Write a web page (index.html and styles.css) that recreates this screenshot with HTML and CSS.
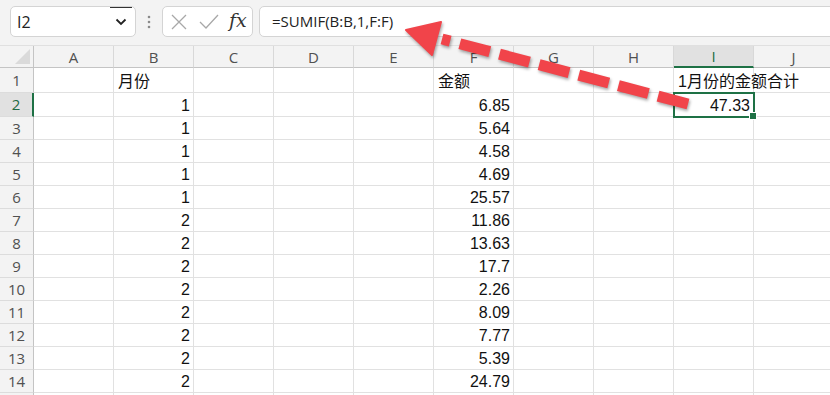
FILE: index.html
```html
<!DOCTYPE html>
<html lang="zh-CN">
  <head>
    <meta charset="UTF-8" />
    <title>SUMIF</title>
    <link rel="stylesheet" href="styles.css">
  </head>
  <body>
    <div class="toolbar">
      <div class="namebox">
        <span class="ref">I2</span>
        <span class="drop">
          <svg width="12" height="8" viewBox="0 0 12 8"><path d="M1.5 1.5 L6 6 L10.5 1.5" fill="none" stroke="#222" stroke-width="1.8"/></svg>
        </span>
      </div>
      <div class="grip">
        <svg width="4" height="16" viewBox="0 0 4 16"><circle cx="2" cy="3" r="1.3" fill="#8a8a8a"/><circle cx="2" cy="8" r="1.3" fill="#8a8a8a"/><circle cx="2" cy="13" r="1.3" fill="#8a8a8a"/></svg>
      </div>
      <div class="fxbox">
        <svg width="16" height="16" viewBox="0 0 16 16"><path d="M1 1 L15 15 M15 1 L1 15" stroke="#a8a8a8" stroke-width="1.3"/></svg>
        <svg width="20" height="16" viewBox="0 0 20 16"><path d="M1 8 L7 14 L19 1" fill="none" stroke="#a8a8a8" stroke-width="1.3"/></svg>
        <span class="fx">fx</span>
      </div>
      <div class="formula">=SUMIF(B:B,1,F:F)</div>
    </div>

    <div class="sheet">
      <div class="row head">
        <div class="corner"><span class="tri"></span></div>
        <div class="col">A</div><div class="col">B</div><div class="col">C</div><div class="col">D</div><div class="col">E</div>
        <div class="col">F</div><div class="col">G</div><div class="col">H</div><div class="col sel">I</div><div class="col">J</div>
      </div>
      <div class="row first">
        <div class="rh">1</div>
        <div></div><div class="txt">月份</div><div></div><div></div><div></div>
        <div class="txt">金额</div><div></div><div></div><div class="txt">1月份的金额合计</div><div></div>
      </div>
      <div class="row second">
        <div class="rh sel">2</div>
        <div></div><div class="num">1</div><div></div><div></div><div></div>
        <div class="num">6.85</div><div></div><div></div><div class="num active">47.33</div><div></div>
      </div>
      <div class="row">
        <div class="rh">3</div>
        <div></div><div class="num">1</div><div></div><div></div><div></div>
        <div class="num">5.64</div><div></div><div></div><div></div><div></div>
      </div>
      <div class="row">
        <div class="rh">4</div>
        <div></div><div class="num">1</div><div></div><div></div><div></div>
        <div class="num">4.58</div><div></div><div></div><div></div><div></div>
      </div>
      <div class="row">
        <div class="rh">5</div>
        <div></div><div class="num">1</div><div></div><div></div><div></div>
        <div class="num">4.69</div><div></div><div></div><div></div><div></div>
      </div>
      <div class="row">
        <div class="rh">6</div>
        <div></div><div class="num">1</div><div></div><div></div><div></div>
        <div class="num">25.57</div><div></div><div></div><div></div><div></div>
      </div>
      <div class="row">
        <div class="rh">7</div>
        <div></div><div class="num">2</div><div></div><div></div><div></div>
        <div class="num">11.86</div><div></div><div></div><div></div><div></div>
      </div>
      <div class="row">
        <div class="rh">8</div>
        <div></div><div class="num">2</div><div></div><div></div><div></div>
        <div class="num">13.63</div><div></div><div></div><div></div><div></div>
      </div>
      <div class="row">
        <div class="rh">9</div>
        <div></div><div class="num">2</div><div></div><div></div><div></div>
        <div class="num">17.7</div><div></div><div></div><div></div><div></div>
      </div>
      <div class="row">
        <div class="rh">10</div>
        <div></div><div class="num">2</div><div></div><div></div><div></div>
        <div class="num">2.26</div><div></div><div></div><div></div><div></div>
      </div>
      <div class="row">
        <div class="rh">11</div>
        <div></div><div class="num">2</div><div></div><div></div><div></div>
        <div class="num">8.09</div><div></div><div></div><div></div><div></div>
      </div>
      <div class="row">
        <div class="rh">12</div>
        <div></div><div class="num">2</div><div></div><div></div><div></div>
        <div class="num">7.77</div><div></div><div></div><div></div><div></div>
      </div>
      <div class="row">
        <div class="rh">13</div>
        <div></div><div class="num">2</div><div></div><div></div><div></div>
        <div class="num">5.39</div><div></div><div></div><div></div><div></div>
      </div>
      <div class="row">
        <div class="rh">14</div>
        <div></div><div class="num">2</div><div></div><div></div><div></div>
        <div class="num">24.79</div><div></div><div></div><div></div><div></div>
      </div>
      <div class="row">
        <div class="rh"></div>
        <div></div><div></div><div></div><div></div><div></div>
        <div></div><div></div><div></div><div></div><div></div>
      </div>
    </div>

    <!-- annotation arrow drawn over the sheet -->
    <svg class="arrow" width="830" height="395" viewBox="0 0 830 395">
      <g fill="#f1444a" stroke="#f1444a">
        <line x1="688" y1="104" x2="442" y2="39" stroke-width="11" stroke-dasharray="31 10" fill="none"/>
        <polygon points="406,30 441,22 432,55" stroke-width="2" stroke-linejoin="round"/>
      </g>
    </svg>
  </body>
</html>
```

FILE: styles.css
```css
* {
  margin: 0;
  padding: 0;
  box-sizing: border-box;
}

body {
  font-family: "Open Sans", "Noto Sans CJK SC", sans-serif;
  background: #ffffff;
  width: 830px;
  height: 395px;
  overflow: hidden;
  position: relative;
}

/* formula bar */
.toolbar {
  height: 46px;
  background: #f3f3f3;
  display: flex;
  align-items: flex-start;
  padding: 6px 0 0 10px;
  border-bottom: 1px solid #e0e0e0;
}

.namebox {
  width: 126px;
  height: 31px;
  background: #ffffff;
  border: 1px solid #d4d4d4;
  border-radius: 5px;
  display: flex;
  align-items: center;
  justify-content: space-between;
  padding-left: 6px;
}

.ref {
  font-size: 16px;
  color: #222;
}

.drop {
  width: 22px;
  height: 29px;
  display: flex;
  align-items: center;
  justify-content: center;
  border-top: 1px solid #333;
  margin-top: -1px;
  margin-right: 3px;
}

.grip {
  width: 26px;
  height: 31px;
  display: flex;
  align-items: center;
  justify-content: center;
}

.fxbox {
  width: 91px;
  height: 31px;
  background: #ffffff;
  border: 1px solid #d4d4d4;
  border-radius: 5px;
  display: flex;
  align-items: center;
  gap: 12px;
  padding-left: 8px;
}

.fx {
  font-family: "DejaVu Serif", serif;
  font-style: italic;
  font-size: 19px;
  color: #333;
  margin-left: -2px;
  margin-top: -3px;
}

.formula {
  flex: 1;
  height: 31px;
  margin-left: 6px;
  margin-right: -10px;
  background: #ffffff;
  border: 1px solid #d4d4d4;
  border-radius: 5px;
  font-size: 15px;
  color: #222;
  padding-left: 12px;
  line-height: 29px;
}

/* grid */
.row {
  display: grid;
  grid-template-columns: 34px repeat(10, 80px);
  height: 23px;
}

.row.first {
  height: 25px;
}

.row.second {
  height: 24px;
}

.row > div {
  border-right: 1px solid #e1e1e1;
  border-bottom: 1px solid #e1e1e1;
  font-family: "Liberation Sans", "Noto Sans CJK SC", sans-serif;
  font-size: 16px;
  color: #111;
  white-space: nowrap;
  display: flex;
  align-items: flex-end;
  line-height: 21px;
}

.row.head {
  height: 22px;
}

.row.head > div {
  background: #f3f3f3;
  border-right: 1px solid #d8d8d8;
  border-bottom: 1px solid #c4c4c4;
  font-family: "Open Sans", sans-serif;
  font-size: 15px;
  color: #505050;
  justify-content: center;
  align-items: center;
  line-height: 20px;
}

.row.head > .corner {
  border-right: 1px solid #c4c4c4;
  position: relative;
}

.tri {
  position: absolute;
  right: 3px;
  bottom: 3px;
  width: 0;
  height: 0;
  border-left: 15px solid transparent;
  border-bottom: 15px solid #dadada;
}

.row.head > .col.sel {
  background: #e1e1e1;
  border-bottom: 2px solid #1e7145;
  color: #1e6b44;
}

.row > .rh {
  background: #f3f3f3;
  border-right: 1px solid #c4c4c4;
  border-bottom: 1px solid #dcdcdc;
  font-family: "Open Sans", sans-serif;
  font-size: 15px;
  color: #505050;
  justify-content: center;
  align-items: center;
}

.row > .rh.sel {
  background: #e1e1e1;
  border-right: 2px solid #1e7145;
  color: #1e6b44;
}

.row > .txt {
  padding-left: 4px;
}

.row > .num {
  justify-content: flex-end;
  padding-right: 3px;
}

.row > .active {
  position: relative;
  outline: 2px solid #1e7145;
  outline-offset: -1px;
  z-index: 1;
}

.active::after {
  content: "";
  position: absolute;
  right: -4px;
  bottom: -4px;
  width: 6px;
  height: 6px;
  background: #1e7145;
  border: 1px solid #ffffff;
}

.arrow {
  position: absolute;
  left: 0;
  top: 0;
  z-index: 2;
  pointer-events: none;
  filter: drop-shadow(1px 2px 1.5px rgba(0, 0, 0, 0.35));
}
```
